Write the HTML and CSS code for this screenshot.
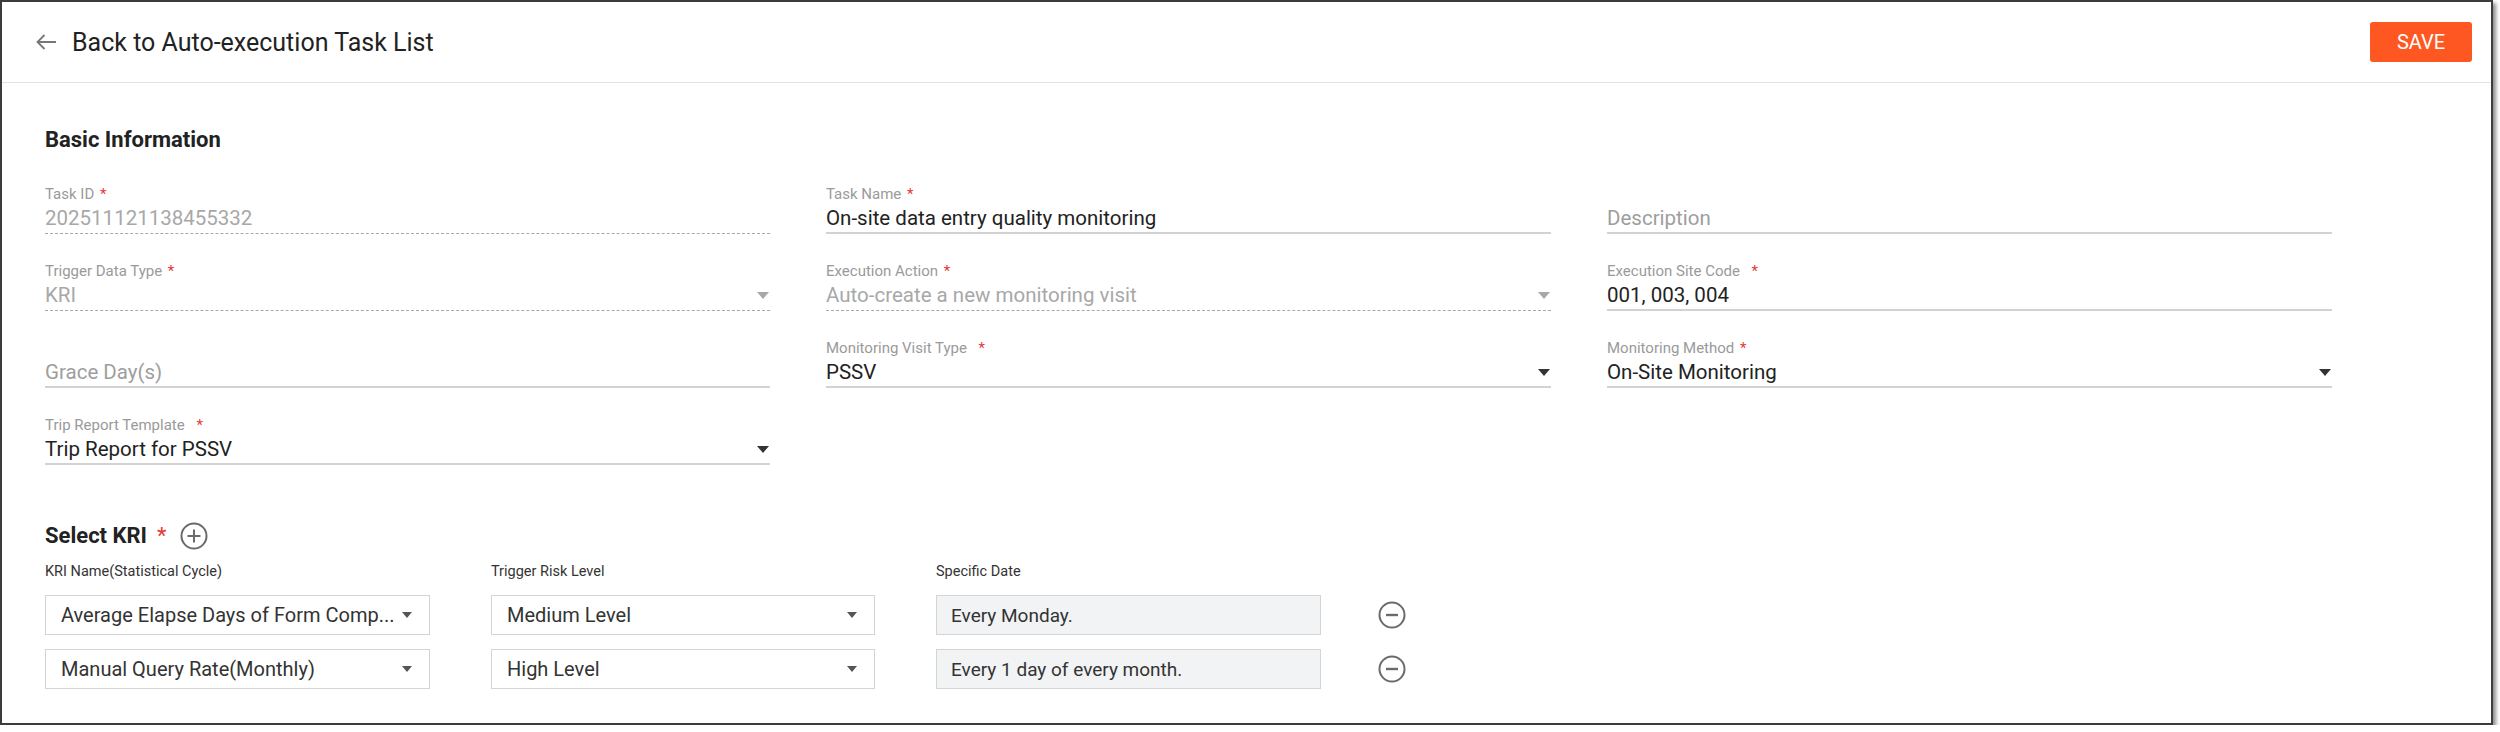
FILE: index.html
```html
<!DOCTYPE html>
<html lang="en">
<head>
  <meta charset="UTF-8" />
  <meta name="viewport" content="width=device-width, initial-scale=1.0"/>
  <title>Auto-execution Task</title>
  <link rel="stylesheet" href="styles.css">
</head>
<body>
  <div class="window">
    <!-- Top bar -->
    <header class="topbar">
      <a class="back-link" href="#">
        <svg class="back-icon" width="22" height="18" viewBox="0 0 22 18">
          <path d="M21 9H2.5M9.5 2L2.5 9l7 7" fill="none" stroke="#777" stroke-width="1.8"/>
        </svg>
        <span>Back to Auto-execution Task List</span>
      </a>
      <button class="btn-save">SAVE</button>
    </header>

    <main class="content">
      <h2 class="section-title">Basic Information</h2>

      <!-- Basic information fields -->
      <div class="field-grid">
        <div class="field is-disabled">
          <label>Task ID <i class="req">*</i></label>
          <div class="value">202511121138455332</div>
        </div>
        <div class="field">
          <label>Task Name <i class="req">*</i></label>
          <div class="value">On-site data entry quality monitoring</div>
        </div>
        <div class="field">
          <label></label>
          <div class="value placeholder">Description</div>
        </div>

        <div class="field is-disabled">
          <label>Trigger Data Type <i class="req">*</i></label>
          <div class="value select">KRI<span class="caret"></span></div>
        </div>
        <div class="field is-disabled">
          <label>Execution Action <i class="req">*</i></label>
          <div class="value select">Auto-create a new monitoring visit<span class="caret"></span></div>
        </div>
        <div class="field">
          <label>Execution Site Code <i class="req wide">*</i></label>
          <div class="value">001, 003, 004</div>
        </div>

        <div class="field">
          <label></label>
          <div class="value placeholder">Grace Day(s)</div>
        </div>
        <div class="field">
          <label>Monitoring Visit Type <i class="req wide">*</i></label>
          <div class="value select">PSSV<span class="caret"></span></div>
        </div>
        <div class="field">
          <label>Monitoring Method <i class="req">*</i></label>
          <div class="value select">On-Site Monitoring<span class="caret"></span></div>
        </div>

        <div class="field">
          <label>Trip Report Template <i class="req wide">*</i></label>
          <div class="value select">Trip Report for PSSV<span class="caret"></span></div>
        </div>
      </div>

      <h2 class="section-title kri-title">
        Select KRI <i class="req">*</i>
        <svg class="circle-btn" width="28" height="28" viewBox="0 0 28 28">
          <circle cx="14" cy="14" r="12.5" fill="none" stroke="#6b6b6b" stroke-width="2"/>
          <path d="M14 7.5v13M7.5 14h13" stroke="#6b6b6b" stroke-width="2"/>
        </svg>
      </h2>

      <!-- KRI rows -->
      <div class="kri-grid">
        <div class="kri-head">KRI Name(Statistical Cycle)</div>
        <div class="kri-head">Trigger Risk Level</div>
        <div class="kri-head">Specific Date</div>
        <div></div>

        <div class="box"><span class="box-text">Average Elapse Days of Form Comp...</span><span class="caret dark"></span></div>
        <div class="box"><span class="box-text">Medium Level</span><span class="caret dark"></span></div>
        <div class="box readonly"><span class="box-text">Every Monday.</span></div>
        <svg class="circle-btn" width="28" height="28" viewBox="0 0 28 28">
          <circle cx="14" cy="14" r="12.5" fill="none" stroke="#6b6b6b" stroke-width="2"/>
          <path d="M8 14h12" stroke="#6b6b6b" stroke-width="2.4"/>
        </svg>

        <div class="box"><span class="box-text">Manual Query Rate(Monthly)</span><span class="caret dark"></span></div>
        <div class="box"><span class="box-text">High Level</span><span class="caret dark"></span></div>
        <div class="box readonly"><span class="box-text">Every 1 day of every month.</span></div>
        <svg class="circle-btn" width="28" height="28" viewBox="0 0 28 28">
          <circle cx="14" cy="14" r="12.5" fill="none" stroke="#6b6b6b" stroke-width="2"/>
          <path d="M8 14h12" stroke="#6b6b6b" stroke-width="2.4"/>
        </svg>
      </div>
    </main>
  </div>
</body>
</html>
```

FILE: styles.css
```css
body {
  margin: 0;
  background-color: #fff;
  font-family: Roboto, "Liberation Sans", sans-serif;
  color: #222;
}
.window {
  width: 2493px;
  height: 725px;
  box-sizing: border-box;
  border: 2px solid #3c3c3c;
  box-shadow: 3px 3px 4px rgba(0,0,0,0.45);
  background-color: #fff;
  overflow: hidden;
}
.topbar {
  height: 80px;
  display: flex;
  align-items: center;
  justify-content: space-between;
  padding: 0 19px 0 33px;
  border-bottom: 1px solid #e3e3e3;
}
.back-link {
  display: flex;
  align-items: center;
  gap: 15px;
  color: #222;
  text-decoration: none;
  font-size: 25px;
}
.btn-save {
  width: 102px;
  height: 40px;
  border: none;
  border-radius: 3px;
  background-color: #ff5722;
  color: #fff;
  font-family: inherit;
  font-size: 20px;
  cursor: pointer;
}
.content {
  padding: 0 43px;
}
.section-title {
  margin: 43px 0 0;
  font-size: 22px;
  line-height: 28px;
  font-weight: 700;
  color: #222;
}
.req {
  font-style: normal;
  font-weight: 400;
  color: #e53935;
  margin-left: 2px;
}
.req.wide {
  margin-left: 8px;
}
.field-grid {
  display: grid;
  grid-template-columns: repeat(3, 725px);
  column-gap: 56px;
  row-gap: 27px;
  margin-top: 30px;
}
.field label {
  display: block;
  height: 20px;
  line-height: 20px;
  font-size: 15px;
  color: #9a9a9a;
}
.field .value {
  height: 28px;
  line-height: 28px;
  font-size: 20.5px;
  color: #222;
  border-bottom: 2px solid #d2d2d2;
  display: flex;
  justify-content: space-between;
  align-items: center;
}
.field .placeholder {
  color: #9e9e9e;
}
.field.is-disabled .value {
  color: #a8a8a8;
  border-bottom: 1px dashed #a8a8a8;
  padding-bottom: 1px;
}
.caret {
  width: 0;
  height: 0;
  border-left: 6px solid transparent;
  border-right: 6px solid transparent;
  border-top: 7px solid #333;
  margin-right: 1px;
}
.is-disabled .caret {
  border-top-color: #a8a8a8;
}
.caret.dark {
  border-left-width: 5px;
  border-right-width: 5px;
  border-top: 6px solid #555;
  flex-shrink: 0;
}
.kri-title {
  margin-top: 57px;
  display: flex;
  align-items: center;
}
.kri-title .req {
  margin-left: 10px;
}
.kri-title .circle-btn {
  margin-left: 13px;
}
.kri-grid {
  display: grid;
  grid-template-columns: 385px 384px 385px 28px;
  column-gap: 61px;
  row-gap: 14px;
  align-items: center;
  margin-top: 12px;
}
.kri-head {
  font-size: 14.5px;
  line-height: 20px;
  color: #333;
  margin-bottom: -1px;
}
.box {
  height: 40px;
  box-sizing: border-box;
  border: 1px solid #d4d4d4;
  padding: 0 16px 0 15px;
  display: flex;
  align-items: center;
  justify-content: space-between;
  gap: 2px;
  font-size: 20px;
  color: #333;
}
.box-text {
  white-space: nowrap;
  overflow: hidden;
}
.box.readonly {
  background-color: #f2f3f5;
  padding-left: 14px;
  font-size: 19px;
}
.circle-btn {
  display: block;
}
.kri-grid .circle-btn {
  margin-left: -4px;
}
```
